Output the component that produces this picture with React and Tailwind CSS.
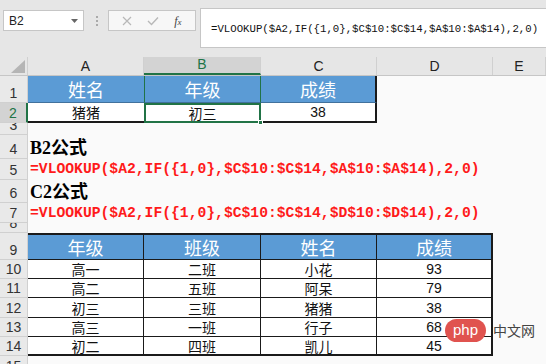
import React from 'react';

const CJK = { fontFamily: '"Noto Sans CJK SC", "Liberation Sans", sans-serif' };
const MONO = { fontFamily: '"Liberation Mono", "Noto Sans CJK SC", monospace' };
const SERIF = { fontFamily: '"Liberation Serif", "Noto Sans CJK SC", serif' };

const formulaB = '=VLOOKUP($A2,IF({1,0},$C$10:$C$14,$A$10:$A$14),2,0)';
const formulaC = '=VLOOKUP($A2,IF({1,0},$C$10:$C$14,$D$10:$D$14),2,0)';

const data = [
  ['高一', '二班', '小花', '93'],
  ['高二', '五班', '阿呆', '79'],
  ['初三', '三班', '猪猪', '38'],
  ['高三', '一班', '行子', '68'],
  ['初二', '四班', '凯儿', '45'],
];

const RowHead = ({ n, active }) => (
  <div
    className={`w-[28px] shrink-0 flex items-end justify-center pb-[1px] border-r border-b border-[#d0d0d0] text-[14px] leading-[16px] overflow-hidden ${
      active ? 'bg-[#d3d3d3] text-[#217346] border-r-[#217346] border-r-2' : 'bg-[#e9e9e9] text-[#333]'
    }`}
    style={{ fontFamily: '"Liberation Sans", sans-serif' }}
  >
    {n}
  </div>
);

const Toolbar = () => (
  <div className="h-[57px] bg-[#e6e6e6] relative flex items-start">
    <div className="mt-[10px] ml-[3px] w-[81px] h-[21px] bg-white border border-[#c6c6c6] flex items-center justify-between px-[5px]">
      <span className="text-[12px] text-[#222]" style={{ fontFamily: '"Liberation Sans", sans-serif' }}>B2</span>
      <svg width="7" height="4" viewBox="0 0 7 4"><path d="M0 0h7L3.5 4z" fill="#666" /></svg>
    </div>
    <div className="mt-[16px] ml-[12px] flex flex-col gap-[2px]">
      <div className="w-[2px] h-[2px] bg-[#aaa]" />
      <div className="w-[2px] h-[2px] bg-[#aaa]" />
      <div className="w-[2px] h-[2px] bg-[#aaa]" />
    </div>
    <div className="mt-[10px] ml-[10px] w-[88px] h-[21px] bg-[#f7f7f7] border border-[#c6c6c6] flex items-center justify-around px-[6px]">
      <svg width="10" height="10" viewBox="0 0 10 10"><path d="M1 1l8 8M9 1l-8 8" stroke="#b8b8b8" strokeWidth="1.2" /></svg>
      <svg width="12" height="10" viewBox="0 0 12 10"><path d="M1 5l3.5 3.5L11 1.5" stroke="#b8b8b8" strokeWidth="1.4" fill="none" /></svg>
      <span className="text-[12px] italic text-[#444]" style={SERIF}>f<span className="text-[9px]">x</span></span>
    </div>
    <div className="mt-[8px] ml-[4px] flex-1 h-[40px] bg-white border-l border-t border-b border-[#c6c6c6] pl-[10px] pt-[4px]">
      <span className="text-[10.7px] text-[#111] whitespace-nowrap" style={MONO}>{formulaB}</span>
    </div>
  </div>
);

const ColHeaders = () => {
  const cols = [
    ['A', 'w-[116px]', false],
    ['B', 'w-[117px]', true],
    ['C', 'w-[116px]', false],
    ['D', 'w-[116px]', false],
    ['E', 'flex-1', false],
  ];
  return (
    <div className="h-[19px] flex border-b border-[#c6c6c6]" style={{ fontFamily: '"Liberation Sans", sans-serif' }}>
      <div className="w-[28px] bg-[#e6e6e6] border-r border-[#d0d0d0] relative">
        <svg className="absolute right-[2px] bottom-[2px]" width="14" height="13" viewBox="0 0 14 13"><path d="M14 0v13H0z" fill="#b5b5b5" /></svg>
      </div>
      {cols.map(([l, w, active]) => (
        <div
          key={l}
          className={`${w} flex items-end justify-center text-[14px] leading-[18px] border-r border-[#d0d0d0] ${
            active ? 'bg-[#d3d3d3] text-[#217346] border-b-2 border-b-[#217346]' : 'bg-[#e6e6e6] text-[#222]'
          }`}
        >
          {l}
        </div>
      ))}
    </div>
  );
};

export default function App() {
  return (
    <div className="w-[546px] h-[364px] overflow-hidden bg-[#fafafa] relative" style={CJK}>
      <Toolbar />
      <ColHeaders />

      {/* row 1 */}
      <div className="h-[27px] flex">
        <RowHead n="1" />
        <div className="w-[116px] bg-[#5b9bd5] text-white text-[18px] flex items-center justify-center border-b border-[#41719c]">姓名</div>
        <div className="w-[117px] bg-[#5b9bd5] text-white text-[18px] flex items-center justify-center border-x border-[#217346] border-b border-b-[#41719c]">年级</div>
        <div className="w-[116px] bg-[#5b9bd5] text-white text-[18px] flex items-center justify-center border-r-2 border-[#1a1a1a] border-b border-b-[#41719c]">成绩</div>
      </div>
      {/* row 2 */}
      <div className="h-[20px] flex">
        <RowHead n="2" active />
        <div className="w-[116px] bg-white text-[#111] text-[14px] flex items-center justify-center border-b-2 border-[#1a1a1a]">猪猪</div>
        <div className="w-[117px] bg-white text-[#111] text-[14px] flex items-center justify-center border-2 border-[#217346] relative">
          初三
          <div className="absolute right-[-4px] bottom-[-4px] w-[5px] h-[5px] bg-[#217346] border border-white" />
        </div>
        <div className="w-[116px] bg-white text-[#111] text-[14px] flex items-center justify-center border-r-2 border-b-2 border-[#1a1a1a]" style={{ fontFamily: '"Liberation Sans", sans-serif' }}>38</div>
      </div>
      {/* row 3 */}
      <div className="h-[12px] flex">
        <RowHead n="3" />
      </div>
      {/* row 4 */}
      <div className="h-[24px] flex">
        <RowHead n="4" />
        <div className="pl-[2px] flex items-end text-[18px] font-bold leading-[22px] text-black" style={SERIF}>B2公式</div>
      </div>
      {/* row 5 */}
      <div className="h-[21px] flex">
        <RowHead n="5" />
        <div className="pl-[2px] flex items-center text-[14.7px] font-bold text-[#ff1a1a] whitespace-nowrap" style={MONO}>{formulaB}</div>
      </div>
      {/* row 6 */}
      <div className="h-[23px] flex">
        <RowHead n="6" />
        <div className="pl-[2px] flex items-end text-[18px] font-bold leading-[22px] text-black" style={SERIF}>C2公式</div>
      </div>
      {/* row 7 */}
      <div className="h-[20px] flex">
        <RowHead n="7" />
        <div className="pl-[2px] flex items-center text-[14.7px] font-bold text-[#ff1a1a] whitespace-nowrap" style={MONO}>{formulaC}</div>
      </div>
      {/* row 8 */}
      <div className="h-[10px] flex">
        <RowHead n="8" />
      </div>
      {/* row 9 header */}
      <div className="h-[27px] flex">
        <RowHead n="9" />
        {['年级', '班级', '姓名', '成绩'].map((t, i) => (
          <div
            key={t}
            className={`${i === 1 ? 'w-[117px]' : 'w-[116px]'} bg-[#5b9bd5] text-white text-[18px] flex items-center justify-center border-t-2 border-b border-r border-[#1a1a1a] ${
              i === 3 ? 'border-r-2' : ''
            }`}
          >
            {t}
          </div>
        ))}
      </div>
      {data.map((row, r) => (
        <div key={r} className={`${r === 2 ? 'h-[20px]' : 'h-[19px]'} flex`}>
          <RowHead n={String(10 + r)} />
          {row.map((t, i) => (
            <div
              key={i}
              className={`${i === 1 ? 'w-[117px]' : 'w-[116px]'} bg-white text-[#111] text-[14px] leading-[16px] flex items-center justify-center border-r border-b border-[#1a1a1a] ${
                i === 3 ? 'border-r-2' : ''
              } ${r === 4 ? 'border-b-2' : ''}`}
              style={i === 3 ? { fontFamily: '"Liberation Sans", sans-serif' } : undefined}
            >
              {t}
            </div>
          ))}
        </div>
      ))}
      <div className="h-[20px] flex">
        <RowHead n="15" />
      </div>

      {/* watermark */}
      <div className="absolute left-[445px] top-[319px] flex items-center gap-[7px]">
        <div className="w-[41px] h-[23px] rounded-full bg-[#e0534f] flex items-center justify-center text-white text-[15px] leading-none pb-[3px]" style={{ fontFamily: '"Liberation Sans", sans-serif' }}>php</div>
        <span className="text-[14px] text-[#444]">中文网</span>
      </div>
    </div>
  );
}
